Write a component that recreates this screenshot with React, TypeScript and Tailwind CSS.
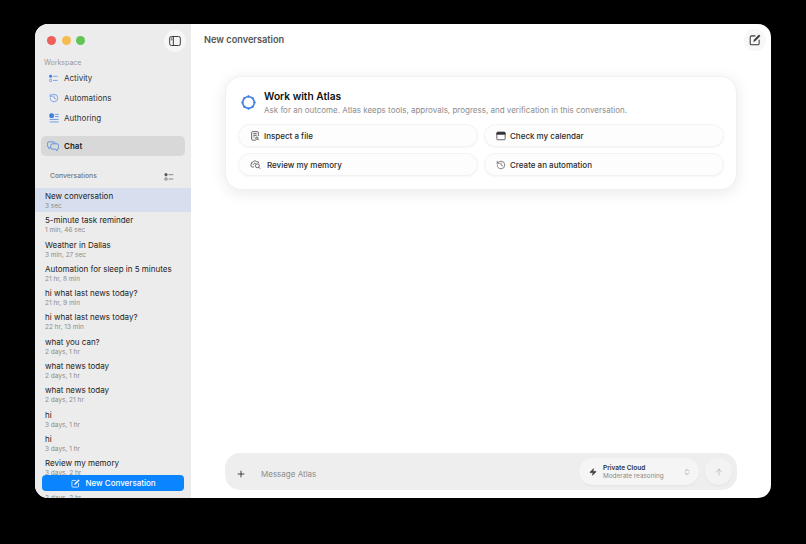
import React from 'react';
import { History, Plus, ArrowUp, Zap, ChevronsUpDown } from 'lucide-react';

const conversations = [
    { title: 'New conversation', age: '3 sec' },
    { title: '5-minute task reminder', age: '1 min, 46 sec' },
    { title: 'Weather in Dallas', age: '3 min, 27 sec' },
    { title: 'Automation for sleep in 5 minutes', age: '21 hr, 8 min' },
    { title: 'hi what last news today?', age: '21 hr, 9 min' },
    { title: 'hi what last news today?', age: '22 hr, 13 min' },
    { title: 'what you can?', age: '2 days, 1 hr' },
    { title: 'what news today', age: '2 days, 1 hr' },
    { title: 'what news today', age: '2 days, 21 hr' },
    { title: 'hi', age: '3 days, 1 hr' },
    { title: 'hi', age: '3 days, 1 hr' },
    { title: 'Review my memory', age: '3 days, 2 hr' },
    { title: 'hi', age: '3 days, 2 hr' },
];

const ChecklistIcon = ({ className }: { className?: string }) => (
    <svg viewBox="0 0 14 12" fill="none" stroke="currentColor" strokeWidth="1" className={className}>
        <circle cx="2.5" cy="2.5" r="1.9" fill="currentColor" />
        <circle cx="2.5" cy="9" r="1.9" />
        <path d="M6.5 2.5h7M6.5 9h7" />
    </svg>
);

const AuthoringIcon = ({ className }: { className?: string }) => (
    <svg viewBox="0 0 14 14" fill="none" stroke="currentColor" strokeWidth="1" className={className}>
        <rect x="1" y="1" width="5.5" height="5.5" rx="1.5" fill="currentColor" />
        <path d="M8.5 2h5M8.5 5h5M1 9h12.5M1 12.5h12.5" />
    </svg>
);

const ChatIcon = ({ className }: { className?: string }) => (
    <svg viewBox="0 0 16 14" fill="none" stroke="currentColor" strokeWidth="1" strokeLinejoin="round" className={className}>
        <path d="M10.5 3.2V2.6A2 2 0 0 0 8.5.8h-6a2 2 0 0 0-2 1.8v3.6a2 2 0 0 0 2 1.8v2l2.2-2" />
        <path d="M7 3.4h6.5a2 2 0 0 1 2 1.8v3.6a2 2 0 0 1-2 1.8v2.2l-2.4-2.2H7a2 2 0 0 1-2-1.8V5.2a2 2 0 0 1 2-1.8Z" />
    </svg>
);

const SidebarIcon = () => (
    <svg viewBox="0 0 14 12" fill="none" stroke="#2e2e2e" strokeWidth="1.1" className="h-[10px] w-[12px]">
        <rect x="0.6" y="0.6" width="12.8" height="10.8" rx="2" />
        <path d="M5 0.6v10.8" />
        <path d="M2 2.5h2M2 4.5h2" strokeWidth="0.9" />
    </svg>
);

const ComposeIcon = ({ className }: { className?: string }) => (
    <svg viewBox="0 0 14 14" fill="none" stroke="currentColor" strokeWidth="1.2" strokeLinecap="round" className={className}>
        <path d="M7 2.2H3a1.6 1.6 0 0 0-1.6 1.6v7.2A1.6 1.6 0 0 0 3 12.6h7.2a1.6 1.6 0 0 0 1.6-1.6V7" />
        <path d="M5.6 8.4 6 6.6 11.6 1l1.4 1.4-5.6 5.6Z" fill="currentColor" strokeWidth="0.6" />
    </svg>
);

const AtlasIcon = ({ className }: { className?: string }) => (
    <svg viewBox="0 0 20 20" fill="none" stroke="currentColor" strokeWidth="1.5" className={className}>
        <path d="M10 2.2 15.5 4.5 17.8 10 15.5 15.5 10 17.8 4.5 15.5 2.2 10 4.5 4.5Z" strokeWidth="0.9" />
        <circle cx="10" cy="10" r="6.6" />
        <g fill="currentColor" stroke="none">
            <circle cx="10" cy="2.8" r="1.2" />
            <circle cx="15.1" cy="4.9" r="1.2" />
            <circle cx="17.2" cy="10" r="1.2" />
            <circle cx="15.1" cy="15.1" r="1.2" />
            <circle cx="10" cy="17.2" r="1.2" />
            <circle cx="4.9" cy="15.1" r="1.2" />
            <circle cx="2.8" cy="10" r="1.2" />
            <circle cx="4.9" cy="4.9" r="1.2" />
        </g>
    </svg>
);

const FileIcon = () => (
    <svg viewBox="0 0 12 12" fill="none" stroke="#333" strokeWidth="0.9" className="h-[10px] w-[10px]">
        <path d="M7 11H3a1 1 0 0 1-1-1V1.8a1 1 0 0 1 1-1h6a1 1 0 0 1 1 1V6" />
        <path d="M4 3.2h4M4 5.2h4M4 7.2h1.5" />
        <circle cx="8.2" cy="8.6" r="1.4" />
        <path d="M9.3 9.7 10.6 11" />
    </svg>
);

const CalendarIcon = () => (
    <svg viewBox="0 0 12 12" fill="none" stroke="#333" strokeWidth="0.9" className="h-[10px] w-[10px]">
        <rect x="1" y="1.5" width="10" height="9" rx="1.2" />
        <path d="M1 2.7a1.2 1.2 0 0 1 1.2-1.2h7.6A1.2 1.2 0 0 1 11 2.7V4H1Z" fill="#333" />
    </svg>
);

const MemoryIcon = () => (
    <svg viewBox="0 0 14 12" fill="none" stroke="#333" strokeWidth="0.9" className="h-[10px] w-[11px]">
        <path d="M3 8.6a2.2 2.2 0 0 1-1.3-3.7A2.3 2.3 0 0 1 4 2.2a2.6 2.6 0 0 1 4.4-.4 2.4 2.4 0 0 1 3 2" />
        <path d="M3 8.6c1 .3 1.6 0 2.2-.5M5 4c.9-.5 1.8-.3 2.3.3M3.6 5.6c.5-.4 1-.4 1.5-.2" />
        <circle cx="9.4" cy="7" r="2.5" />
        <path d="M11.2 8.8 13 10.8" />
    </svg>
);

const Suggestion = ({ icon, label, gap }: { icon: React.ReactNode; label: string; gap: string }) => (
    <button className={`flex h-[23px] items-center rounded-full border border-[#f2f2f2] bg-[#fdfdfd] pl-[11px] text-left text-[8px] font-medium text-[#2a2a2a] shadow-[0_1px_2px_rgba(0,0,0,0.04)] ${gap}`}>
        {icon}
        {label}
    </button>
);

export default function App() {
    return (
        <div className="h-[544px] w-[806px] overflow-hidden bg-black pl-[35px] pt-[24px] font-['Inter',sans-serif]">
            <div className="flex h-[474px] w-[736px] overflow-hidden rounded-[13px] bg-white">
                {/* Sidebar */}
                <aside className="relative flex w-[156px] shrink-0 flex-col bg-[#ececec]">
                    <div className="flex h-[32px] shrink-0 items-center justify-between pl-[12px] pr-[5px] pt-[1px]">
                        <div className="flex gap-[5.5px]">
                            <span className="h-[9px] w-[9px] rounded-full bg-[#ee5f5b]" />
                            <span className="h-[9px] w-[9px] rounded-full bg-[#f5bd4f]" />
                            <span className="h-[9px] w-[9px] rounded-full bg-[#61c454]" />
                        </div>
                        <div className="flex h-[22px] w-[22px] items-center justify-center rounded-full bg-[#f6f6f6]">
                            <SidebarIcon />
                        </div>
                    </div>

                    <div className="pl-[9px] pt-[1px] text-[7px] leading-[11px] text-[#9a9a9a]">Workspace</div>
                    <nav className="flex flex-col text-[8px] text-[#333]">
                        <div className="flex h-[20px] items-center gap-[6px] pl-[14px]">
                            <ChecklistIcon className="h-[9px] w-[9px] text-[#3f7fe0]" />
                            Activity
                        </div>
                        <div className="flex h-[20px] items-center gap-[5px] pl-[14px]">
                            <History size={10} strokeWidth={1.5} className="text-[#3f7fe0]" />
                            Automations
                        </div>
                        <div className="flex h-[20px] items-center gap-[5px] pl-[14px]">
                            <AuthoringIcon className="h-[10px] w-[10px] text-[#3f7fe0]" />
                            Authoring
                        </div>
                    </nav>

                    <div className="mx-[6px] mt-[8px] flex h-[20px] items-center gap-[5px] rounded-[5px] bg-[#d8d8d8] pl-[6px] text-[8px] font-semibold text-[#222]">
                        <ChatIcon className="h-[11px] w-[12px] text-[#3f7fe0]" />
                        Chat
                    </div>

                    <div className="flex h-[32px] shrink-0 items-center justify-between pl-[15px] pr-[17px] pt-[9px] text-[6.8px] font-medium text-[#777]">
                        Conversations
                        <ChecklistIcon className="h-[8px] w-[10px] text-[#555]" />
                    </div>

                    <ul className="min-h-0 flex-1 overflow-hidden">
                        {conversations.map((c, i) => (
                            <li key={i} className={`h-[24.3px] pl-[10px] pt-[3px] ${i === 0 ? 'bg-[#d7dfee]' : ''}`}>
                                <div className="text-[8px] leading-[10px] text-[#222]">{c.title}</div>
                                <div className="mt-[1px] text-[6.5px] leading-[8px] text-[#8a8a8a]">{c.age}</div>
                            </li>
                        ))}
                    </ul>

                    <button className="absolute bottom-[7px] left-[7px] flex h-[16px] w-[142px] items-center justify-center gap-[5px] rounded-[4px] bg-[#0a84ff] pl-[1px] text-[8px] font-medium text-white">
                        <ComposeIcon className="h-[9px] w-[9px]" />
                        New Conversation
                    </button>
                </aside>

                {/* Main */}
                <main className="flex min-w-0 flex-1 flex-col">
                    <header className="flex h-[32px] shrink-0 items-center justify-between pl-[13px] pr-[5px]">
                        <h1 className="text-[9.2px] font-semibold text-[#555]">New conversation</h1>
                        <div className="flex h-[22px] w-[22px] items-center justify-center rounded-full bg-[#f7f7f7]">
                            <ComposeIcon className="h-[12px] w-[12px] text-[#333]" />
                        </div>
                    </header>

                    <div className="flex flex-1 flex-col px-[34px]">
                        <section className="mt-[20px] h-[114px] rounded-[16px] border border-[#f0f0f0] bg-white px-[12px] pt-[12px] shadow-[0_3px_16px_rgba(0,0,0,0.09)]">
                            <div className="flex items-center gap-[7px] pl-[2px]">
                                <AtlasIcon className="h-[17px] w-[17px] text-[#3f7fe0]" />
                                <div>
                                    <div className="text-[10.2px] font-semibold leading-[14px] text-[#111]">Work with Atlas</div>
                                    <div className="mt-[1px] text-[8px] leading-[12px] text-[#8c8c8c]">Ask for an outcome. Atlas keeps tools, approvals, progress, and verification in this conversation.</div>
                                </div>
                            </div>
                            <div className="mt-[8px] grid grid-cols-2 gap-x-[6px] gap-y-[6px]">
                                <Suggestion gap="gap-[4px]" icon={<FileIcon />} label="Inspect a file" />
                                <Suggestion gap="gap-[4px]" icon={<CalendarIcon />} label="Check my calendar" />
                                <Suggestion gap="gap-[6px]" icon={<MemoryIcon />} label="Review my memory" />
                                <Suggestion gap="gap-[4px]" icon={<History size={10} strokeWidth={1.4} className="text-[#333]" />} label="Create an automation" />
                            </div>
                        </section>

                        <div className="mt-auto mb-[8px] flex h-[37px] items-center rounded-[15px] bg-[#eeeeee] pl-[11px] pr-[5px]">
                            <Plus size={10} strokeWidth={2} className="mt-[5px] text-[#222]" />
                            <span className="ml-[15px] mt-[5px] text-[8px] text-[#8c8c8c]">Message Atlas</span>
                            <div className="ml-auto flex h-[27px] w-[120px] items-center rounded-full bg-[#f5f5f5] pl-[10px] pr-[8px] shadow-[0_1px_2px_rgba(0,0,0,0.05)]">
                                <Zap size={8} strokeWidth={1.5} fill="currentColor" className="text-[#444]" />
                                <div className="ml-[6px] pt-[1px]">
                                    <div className="text-[6.5px] font-semibold leading-[8px] text-[#333]">Private Cloud</div>
                                    <div className="text-[6.4px] leading-[9px] text-[#8a8a8a]">Moderate reasoning</div>
                                </div>
                                <ChevronsUpDown size={8} className="ml-auto text-[#888]" />
                            </div>
                            <div className="ml-[6px] flex h-[27px] w-[27px] items-center justify-center rounded-full bg-[#f3f3f3] shadow-[0_1px_2px_rgba(0,0,0,0.05)]">
                                <ArrowUp size={10} strokeWidth={1.5} className="text-[#aaa]" />
                            </div>
                        </div>
                    </div>
                </main>
            </div>
        </div>
    );
}
